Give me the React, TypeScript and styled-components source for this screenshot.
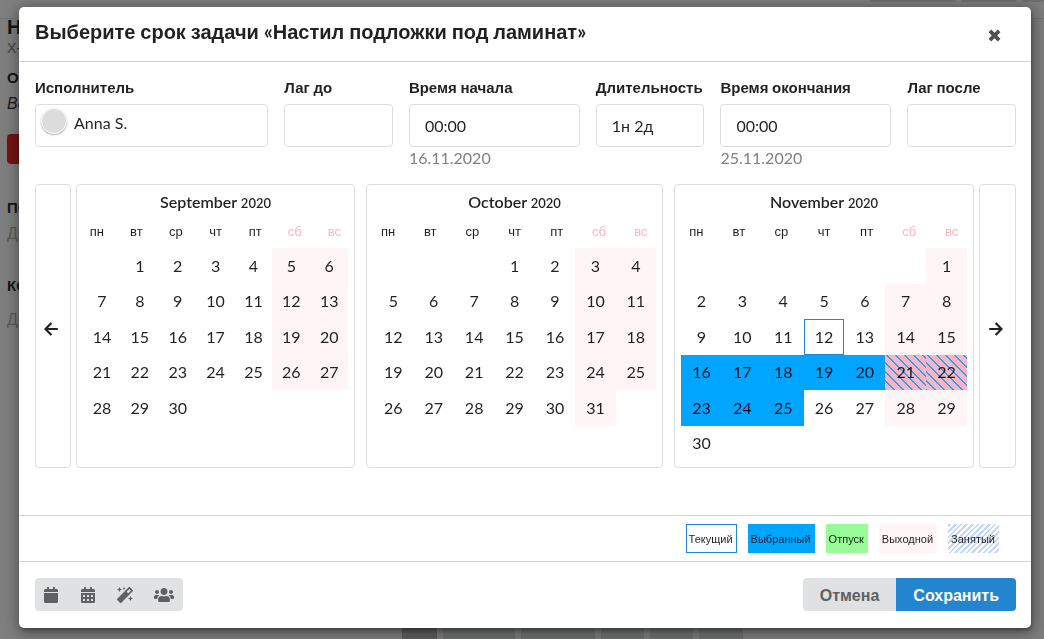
import React from "react";
import styled, { createGlobalStyle, css } from "styled-components";
import { FaCalendar, FaCalendarAlt, FaMagic, FaUsers } from "react-icons/fa";

const GlobalStyle = createGlobalStyle`
  *, *::before, *::after { box-sizing: border-box; }
  body {
    margin: 0;
    background: #7f7f7f;
    color: rgba(0, 0, 0, 0.87);
    font-family: Lato, "Liberation Sans", sans-serif;
    font-size: 16px;
  }
  button, input { font: inherit; color: inherit; }
`;

/* ---------- page below the dialog ---------- */

const Page = styled.div`
  display: flex;
  flex-direction: column;
  height: 100vh;
  overflow: hidden;
`;

const TopBar = styled.header`
  display: flex;
  justify-content: flex-end;
  align-items: flex-start;
  flex: none;
  gap: 5px;
  height: 19px;
  border-bottom: 1px solid #757575;
`;

const Tab = styled.span<{ $w: number }>`
  width: ${(p) => p.$w}px;
  height: 2px;
  border-radius: 0 0 3px 3px;
  background: #707070;
`;

const Aside = styled.aside`
  flex: 1;
  min-height: 0;
  padding-left: 7px;
  white-space: nowrap;
  color: #151515;
  font-family: "Liberation Sans", sans-serif;
`;

const AsideTitle = styled.h2`
  margin: 0;
  font-size: 20px;
  line-height: 16px;
`;

const AsideHead = styled.h3<{ $gap?: number }>`
  margin: 0 0 ${(p) => p.$gap ?? 0}px;
  font-size: 15px;
  line-height: 26px;
`;

const AsideText = styled.p<{ $italic?: boolean; $gap: number }>`
  margin: 0 0 ${(p) => p.$gap}px;
  font-size: 16px;
  line-height: 26px;
  color: ${(p) => (p.$italic ? "#1c1c1c" : "#5a5a5a")};
  font-style: ${(p) => (p.$italic ? "italic" : "normal")};
`;

const AsideCode = styled.p`
  margin: 0 0 4px;
  color: #404040;
  font-size: 14px;
  line-height: 26px;
`;

const Danger = styled.div`
  width: 60px;
  height: 30px;
  margin: 0 0 31px;
  border-radius: 4px;
  background: #751313;
`;

const Pager = styled.div`
  display: flex;
  justify-content: center;
  flex: none;
  gap: 6px;
  height: 40px;
  padding-left: 101px;
`;

const PagerItem = styled.span<{ $w: number; $dark?: boolean }>`
  width: ${(p) => p.$w}px;
  background: ${(p) => (p.$dark ? "#5f5f5f" : "#707271")};
`;

/* ---------- dialog ---------- */

const Overlay = styled.div`
  position: fixed;
  inset: 0;
  padding: 7px 13px 11px 19px;
`;

const Modal = styled.section`
  display: flex;
  flex-direction: column;
  min-height: 100%;
  border-radius: 5px;
  background: #fff;
  box-shadow: 1px 3px 3px rgba(0, 0, 0, 0.2), 1px 3px 15px 2px rgba(0, 0, 0, 0.4);
`;

const ModalHeader = styled.header`
  display: flex;
  align-items: center;
  justify-content: space-between;
  height: 55px;
  padding: 0 30px 0 16px;
  border-bottom: 1px solid #d4d4d5;
`;

const Title = styled.h1`
  margin: 0;
  padding-bottom: 5px;
  font-size: 20px;
  line-height: 26px;
  font-weight: 700;
`;

const CloseButton = styled.button`
  display: flex;
  margin-top: 3px;
  padding: 0;
  border: 0;
  background: none;
  color: #4f4f4f;
`;

const ModalBody = styled.div`
  flex: 1;
  padding: 16px 15px 16px 16px;
`;

const Fields = styled.form`
  display: grid;
  grid-template-columns: repeat(16, 1fr);
  column-gap: 16px;
  height: 106px;
`;

const Field = styled.div<{ $span: number }>`
  grid-column: span ${(p) => p.$span};
  min-width: 0;
`;

const Label = styled.label`
  display: block;
  height: 26px;
  font-size: 15px;
  line-height: 18px;
  font-weight: 700;
  white-space: nowrap;
`;

const controlBox = css`
  display: flex;
  align-items: center;
  width: 100%;
  height: 43px;
  border: 1px solid #dcdddd;
  border-radius: 4px;
  background: #fff;
`;

const Input = styled.input`
  ${controlBox}
  padding: 0 15px;
  outline: none;
`;

const PersonSelect = styled.button`
  ${controlBox}
  gap: 7px;
  padding: 0 5px 6px;
  text-align: left;
`;

const Avatar = styled.span`
  width: 26px;
  height: 26px;
  margin-bottom: 3px;
  border: 1px solid #fff;
  border-radius: 50%;
  background: #dcdcdc;
  box-shadow: 0 1px 2px rgba(0, 0, 0, 0.3);
`;

const Hint = styled.div`
  color: #808080;
  font-size: 16px;
  line-height: 21px;
`;

const Calendars = styled.div`
  display: flex;
  gap: 5px;
`;

const Months = styled.div`
  display: flex;
  flex: 1;
  gap: 11px;
`;

const NavButton = styled.button`
  display: flex;
  align-items: center;
  justify-content: center;
  flex: none;
  width: 36px;
  padding: 5px 4px 0 0;
  border: 1px solid #dcdddd;
  border-radius: 4px;
  background: #fff;

  &:last-child {
    width: 37px;
  }
`;

const MonthCard = styled.div<{ $grow: number }>`
  flex: ${(p) => p.$grow} 1 0;
  padding-bottom: 6px;
  border: 1px solid #dcdddd;
  border-radius: 4px;
`;

const MonthTable = styled.table`
  display: block;

  caption,
  thead {
    display: block;
  }
  tr {
    display: grid;
    grid-template-columns: repeat(7, 1fr);
  }
  tbody {
    display: grid;
    grid-template-rows: repeat(6, 1fr);
    height: 213px;
    padding: 0 6px;
  }
`;

const MonthName = styled.caption`
  font-size: 16px;
  line-height: 34px;
  font-weight: 600;
`;

const Year = styled.span`
  font-size: 13px;
  font-weight: 600;
`;

const WeekDay = styled.th<{ $weekend: boolean }>`
  height: 28px;
  padding: 0;
  color: ${(p) => (p.$weekend ? "#ffb3c3" : "inherit")};
  font-size: 13px;
  line-height: 22px;
  font-weight: 400;
`;

type DayKind = "plain" | "weekend" | "selected" | "selectedWeekend" | "current";

const dayLook: Record<DayKind, string> = {
  plain: "",
  weekend: "background: #fff5f6;",
  selected: "background: #00a5ff;",
  selectedWeekend:
    "background: repeating-linear-gradient(45deg, #1ba6f8 0 12%, #ffb3c3 12% 50%) 0 0 / 9px 9px;",
  current: "border: 1px solid #2185d0;",
};

const Day = styled.td<{ $kind: DayKind }>`
  display: flex;
  align-items: center;
  justify-content: center;
  padding: 0;
  font-size: 16px;
  line-height: 20px;
  ${(p) => dayLook[p.$kind]}
`;

const Legend = styled.div`
  display: flex;
  align-items: center;
  justify-content: flex-end;
  gap: 11px;
  height: 46px;
  padding: 0 32px 0 16px;
  border-top: 1px solid #d4d4d5;
`;

type LegendKind = "current" | "selected" | "vacation" | "weekend" | "busy";

const legendLook: Record<LegendKind, string> = {
  current: "border-color: #2185d0;",
  selected: "background: #00a5ff;",
  vacation: "background: #98fb98;",
  weekend: "background: #fff5f6;",
  busy: "background: repeating-linear-gradient(-45deg, #fff 0 2px, #c4d8ff 2px 4px) border-box;",
};

const LegendItem = styled.span<{ $kind: LegendKind }>`
  height: 29px;
  padding: 0 3px 0 2px;
  border: 1px solid transparent;
  font-family: "Liberation Sans", sans-serif;
  font-size: 11px;
  line-height: 28px;
  ${(p) => legendLook[p.$kind]}
`;

const Actions = styled.footer`
  display: flex;
  align-items: center;
  justify-content: space-between;
  height: 67px;
  padding: 0 15px 1px 16px;
  border-top: 1px solid #d4d4d5;
`;

const ButtonGroup = styled.div`
  display: flex;
  overflow: hidden;
  border-radius: 4px;
`;

const IconButton = styled.button`
  display: flex;
  align-items: center;
  width: 37px;
  height: 33px;
  padding: 0 0 0 8px;
  border: 0;
  background: #e0e1e2;
  color: #5f6061;
  font-size: 16px;

  svg {
    flex: none;
  }
`;

const TextButton = styled.button<{ $primary?: boolean }>`
  height: 33px;
  padding: 2px 17px 0;
  border: 0;
  background: ${(p) => (p.$primary ? "#2185d0" : "#e0e1e2")};
  color: ${(p) => (p.$primary ? "#fff" : "#5f6061")};
  font-family: "Liberation Sans", sans-serif;
  font-size: 16px;
  font-weight: 700;
`;

const CyrillicRun = styled.span`
  font-family: "Liberation Sans", sans-serif;
`;

/* Cyrillic words use the sans fallback; spaces and punctuation stay in Lato. */
function Mixed({ text }: { text: string }) {
  return (
    <>
      {text
        .split(/([\u0400-\u04ff]+)/)
        .map((part, i) => (i % 2 ? <CyrillicRun key={i}>{part}</CyrillicRun> : part))}
    </>
  );
}

function CloseIcon() {
  return (
    <svg width="13" height="13" viewBox="0 0 13 13" fill="none" stroke="currentColor" strokeWidth="3.8">
      <path d="M1.9 1.9L11.1 11.1M11.1 1.9L1.9 11.1" />
    </svg>
  );
}

function ArrowIcon({ direction }: { direction: "left" | "right" }) {
  return (
    <svg width="14" height="14" viewBox="0 0 14 14" fill="none" stroke="currentColor" strokeWidth="2.2">
      <path
        d={
          direction === "left"
            ? "M13.8 7H1.8M7.4 0.9L1.5 7L7.4 13.1"
            : "M0.2 7H12.2M6.6 0.9L12.5 7L6.6 13.1"
        }
      />
    </svg>
  );
}

interface MonthData {
  name: string;
  offset: number;
  days: number;
  grow: number;
  current?: number;
  range?: [number, number];
}

const months: MonthData[] = [
  { name: "September", offset: 1, days: 30, grow: 279 },
  { name: "October", offset: 3, days: 31, grow: 297 },
  { name: "November", offset: 6, days: 30, grow: 300, current: 12, range: [16, 25] },
];

const weekDays = ["пн", "вт", "ср", "чт", "пт", "сб", "вс"];

function kindOf(m: MonthData, day: number, col: number): DayKind {
  const weekend = col > 4;
  if (m.range && day >= m.range[0] && day <= m.range[1]) {
    return weekend ? "selectedWeekend" : "selected";
  }
  if (day === m.current) return "current";
  return weekend ? "weekend" : "plain";
}

function Month({ month }: { month: MonthData }) {
  return (
    <MonthCard $grow={month.grow}>
      <MonthTable>
        <MonthName>
          {month.name} <Year>2020</Year>
        </MonthName>
        <thead>
          <tr>
            {weekDays.map((d, i) => (
              <WeekDay key={d} scope="col" $weekend={i > 4}>
                <Mixed text={d} />
              </WeekDay>
            ))}
          </tr>
        </thead>
        <tbody>
          {[0, 1, 2, 3, 4, 5].map((row) => (
            <tr key={row}>
              {weekDays.map((d, col) => {
                const day = row * 7 + col - month.offset + 1;
                const inside = day >= 1 && day <= month.days;
                return (
                  <Day key={d} $kind={inside ? kindOf(month, day, col) : "plain"}>
                    {inside ? day : null}
                  </Day>
                );
              })}
            </tr>
          ))}
        </tbody>
      </MonthTable>
    </MonthCard>
  );
}

interface FieldData {
  id: string;
  label: string;
  span: number;
  value: string;
  hint?: string;
}

const fields: FieldData[] = [
  { id: "lag-before", label: "Лаг до", span: 2, value: "" },
  { id: "start", label: "Время начала", span: 3, value: "00:00", hint: "16.11.2020" },
  { id: "duration", label: "Длительность", span: 2, value: "1н 2д" },
  { id: "end", label: "Время окончания", span: 3, value: "00:00", hint: "25.11.2020" },
  { id: "lag-after", label: "Лаг после", span: 2, value: "" },
];

export default function App() {
  return (
    <>
      <GlobalStyle />
      <Page>
        <TopBar>
          <Tab $w={86} />
          <Tab $w={56} />
          <Tab $w={22} />
        </TopBar>
        <Aside>
          <AsideTitle>Н</AsideTitle>
          <AsideCode>Х-</AsideCode>
          <AsideHead>ОП</AsideHead>
          <AsideText $italic $gap={17}>
            Ве
          </AsideText>
          <Danger />
          <AsideHead>ПО</AsideHead>
          <AsideText $gap={26}>До</AsideText>
          <AsideHead $gap={8}>КО</AsideHead>
          <AsideText $gap={0}>До</AsideText>
        </Aside>
        <Pager>
          <PagerItem $w={35} $dark />
          <PagerItem $w={72} />
          <PagerItem $w={74} />
          <PagerItem $w={43} />
          <PagerItem $w={43} />
          <PagerItem $w={44} />
        </Pager>
      </Page>
      <Overlay>
        <Modal role="dialog" aria-labelledby="dialog-title">
          <ModalHeader>
            <Title id="dialog-title">
              <Mixed text="Выберите срок задачи «Настил подложки под ламинат»" />
            </Title>
            <CloseButton type="button" aria-label="Закрыть">
              <CloseIcon />
            </CloseButton>
          </ModalHeader>
          <ModalBody>
            <Fields>
              <Field $span={4}>
                <Label htmlFor="person">
                  <Mixed text="Исполнитель" />
                </Label>
                <PersonSelect id="person" type="button" aria-haspopup="listbox">
                  <Avatar />
                  Anna S.
                </PersonSelect>
              </Field>
              {fields.map((f) => (
                <Field key={f.id} $span={f.span}>
                  <Label htmlFor={f.id}>
                    <Mixed text={f.label} />
                  </Label>
                  <Input id={f.id} type="text" defaultValue={f.value} />
                  {f.hint && <Hint>{f.hint}</Hint>}
                </Field>
              ))}
            </Fields>
            <Calendars>
              <NavButton type="button" aria-label="Назад">
                <ArrowIcon direction="left" />
              </NavButton>
              <Months>
                {months.map((m) => (
                  <Month key={m.name} month={m} />
                ))}
              </Months>
              <NavButton type="button" aria-label="Вперёд">
                <ArrowIcon direction="right" />
              </NavButton>
            </Calendars>
          </ModalBody>
          <Legend>
            <LegendItem $kind="current">Текущий</LegendItem>
            <LegendItem $kind="selected">Выбранный</LegendItem>
            <LegendItem $kind="vacation">Отпуск</LegendItem>
            <LegendItem $kind="weekend">Выходной</LegendItem>
            <LegendItem $kind="busy">Занятый</LegendItem>
          </Legend>
          <Actions>
            <ButtonGroup>
              <IconButton type="button" aria-label="День">
                <FaCalendar />
              </IconButton>
              <IconButton type="button" aria-label="Месяц">
                <FaCalendarAlt />
              </IconButton>
              <IconButton type="button" aria-label="Автоподбор">
                <FaMagic />
              </IconButton>
              <IconButton type="button" aria-label="Команда">
                <FaUsers size={20} />
              </IconButton>
            </ButtonGroup>
            <ButtonGroup>
              <TextButton type="button">Отмена</TextButton>
              <TextButton type="button" $primary>
                Сохранить
              </TextButton>
            </ButtonGroup>
          </Actions>
        </Modal>
      </Overlay>
    </>
  );
}
